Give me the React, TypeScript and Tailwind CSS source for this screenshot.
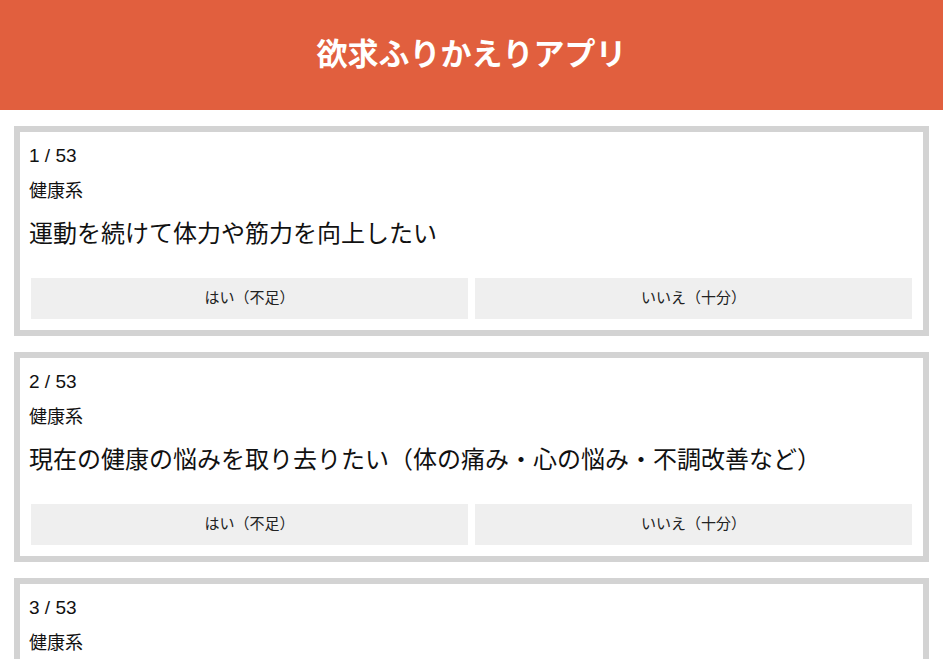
import React from 'react';

type Question = {
  id: number;
  category: string;
  text: string;
};

const TOTAL = 53;

const questions: Question[] = [
  { id: 1, category: '健康系', text: '運動を続けて体力や筋力を向上したい' },
  { id: 2, category: '健康系', text: '現在の健康の悩みを取り去りたい（体の痛み・心の悩み・不調改善など）' },
  { id: 3, category: '健康系', text: 'バランスの良い食事をとって健康的な体を維持したい' },
];

const QuestionCard: React.FC<{ q: Question }> = ({ q }) => (
  <div className="mx-[14px] mt-[16px] border-[6px] border-[#d3d3d3] bg-white px-[9px] pt-[12px] pb-[11px]">
    <div className="text-[19px] leading-[24px] text-[#111]">
      {q.id} / {TOTAL}
    </div>
    <div className="mt-[11px] text-[18px] leading-[24px] text-[#111]">{q.category}</div>
    <div className="mt-[15px] text-[24px] leading-[32px] text-[#111] whitespace-nowrap">{q.text}</div>
    <div className="mt-[28px] flex gap-[7px] px-[2px]">
      <button className="flex h-[41px] flex-1 items-center justify-center bg-[#efefef] text-[15px] text-[#222]">
        はい（不足）
      </button>
      <button className="flex h-[41px] flex-1 items-center justify-center bg-[#efefef] text-[15px] text-[#222]">
        いいえ（十分）
      </button>
    </div>
  </div>
);

export default function App() {
  return (
    <div
      className="h-screen overflow-hidden bg-white"
      style={{ fontFamily: '"Liberation Sans", "Noto Sans CJK JP", sans-serif' }}
    >
      <header className="flex h-[110px] items-center justify-center bg-[#e15f3e]">
        <h1 className="text-[31px] font-bold text-white">欲求ふりかえりアプリ</h1>
      </header>
      {questions.map((q) => (
        <QuestionCard key={q.id} q={q} />
      ))}
    </div>
  );
}
